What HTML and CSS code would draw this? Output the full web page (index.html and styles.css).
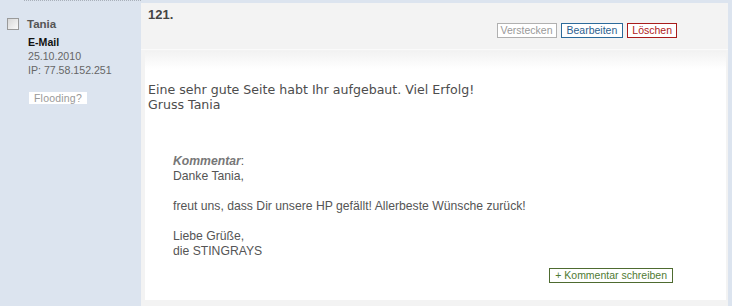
FILE: index.html
```html
<!DOCTYPE html>
<html lang="de">

<head>
  <meta charset="UTF-8">
  <meta name="viewport" content="width=device-width, initial-scale=1.0">
  <title>Gästebuch</title>
  <link rel="stylesheet" href="styles.css">
</head>

<body>
  <div class="entry">
    <div class="author">
      <div class="author-name"><span class="check"></span>Tania</div>
      <ul class="author-info">
        <li><a class="mail" href="#">E-Mail</a></li>
        <li>25.10.2010</li>
        <li>IP: 77.58.152.251</li>
      </ul>
      <span class="flood">Flooding?</span>
    </div>

    <div class="post">
      <div class="post-head">
        <div class="post-num">121.</div>
        <div class="post-actions">
          <a class="btn btn-hide" href="#">Verstecken</a>
          <a class="btn btn-edit" href="#">Bearbeiten</a>
          <a class="btn btn-delete" href="#">Löschen</a>
        </div>
      </div>
      <div class="post-body">
        <p class="msg">Eine sehr gute Seite habt Ihr aufgebaut. Viel Erfolg!<br>Gruss Tania</p>
        <div class="comment">
          <p><b class="comment-label">Kommentar</b>:</p>
          <p>Danke Tania,</p>
          <p class="gap">freut uns, dass Dir unsere HP gefällt! Allerbeste Wünsche zurück!</p>
          <p class="gap">Liebe Grüße,</p>
          <p>die STINGRAYS</p>
        </div>
        <div class="comment-foot">
          <a class="btn btn-comment" href="#">+ Kommentar schreiben</a>
        </div>
      </div>
    </div>
  </div>
</body>

</html>
```

FILE: styles.css
```css
* {
  margin: 0;
  padding: 0;
}

ul {
  list-style-type: none;
}

a {
  text-decoration: none;
}

body {
  background: #dce4ef;
  font-family: "Liberation Sans", Arial, sans-serif;
  color: #555;
  height: 306px;
  overflow: hidden;
}

.entry {
  display: flex;
  height: 306px;
}

/* linke Spalte */
.author {
  width: 141px;
  flex-shrink: 0;
  border-top: 1px dotted #a9b0ba;
  position: relative;
}

/* die gepunktete Linie beginnt erst bei 24px */
.author::before {
  content: "";
  position: absolute;
  top: -1px;
  left: 0;
  width: 24px;
  border-top: 1px solid #dce4ef;
}

.author-name {
  display: flex;
  align-items: center;
  padding: 16px 0 0 7px;
  font-size: 11.5px;
  font-weight: bold;
  color: #555;
  line-height: 14px;
}

.check {
  display: inline-block;
  width: 10px;
  height: 10px;
  border: 1px solid #9a9a9a;
  background: linear-gradient(135deg, #d8d8d8, #fafafa);
  margin-right: 8px;
}

.author-info {
  padding: 4px 0 0 28px;
  font-size: 10.6px;
  line-height: 14px;
  color: #666;
}

.author-info .mail {
  color: #111;
  font-weight: bold;
}

.flood {
  display: inline-block;
  margin: 15px 0 0 29px;
  padding: 0 5px;
  background: #fff;
  color: #999;
  font-size: 10.5px;
  line-height: 12px;
  letter-spacing: 0.2px;
}

/* Beitrag */
.post {
  flex: 1;
  margin: 3px 4px 0 0;
  background: #f3f3f3;
  display: flex;
  flex-direction: column;
}

.post-head {
  height: 48px;
  padding: 4px 51px 0 7px;
  border-bottom: 1px solid #fafafa;
  box-sizing: border-box;
}

.post-num {
  font-size: 13px;
  font-weight: bold;
  color: #444;
  line-height: 16px;
}

.post-actions {
  display: flex;
  justify-content: flex-end;
  gap: 4px;
}

.btn {
  display: inline-block;
  padding: 0 4px;
  border: 1px solid #aaa;
  font-size: 10.5px;
  line-height: 13px;
  background: #fff;
}

.btn-hide {
  color: #999;
  border-color: #b0b0b0;
  padding: 0 3px;
}

.btn-edit {
  color: #2c5e8e;
  border-color: #2c6a9a;
  padding: 0 5px;
}

.btn-delete {
  color: #b02020;
  border-color: #a81c1c;
}

.post-body {
  flex: 1;
  margin: 1px 2px 6px 4px;
  background: linear-gradient(#f2f2f2, #fff 18px);
  padding: 31px 53px 17px 3px;
}

.msg {
  font-family: "DejaVu Sans", Verdana, sans-serif;
  font-size: 12.6px;
  line-height: 15px;
  color: #4d4d4d;
}

.comment {
  margin-top: 42px;
  padding-left: 25px;
  font-size: 12.2px;
  line-height: 15px;
  color: #555;
}

.comment .gap {
  margin-top: 15px;
}

.comment-label {
  font-style: italic;
  color: #777;
}

.comment-foot {
  display: flex;
  justify-content: flex-end;
  margin-top: 9px;
}

.btn-comment {
  color: #4f7a33;
  border-color: #4e6b30;
  padding: 0 5px;
  font-size: 10.5px;
}
```
